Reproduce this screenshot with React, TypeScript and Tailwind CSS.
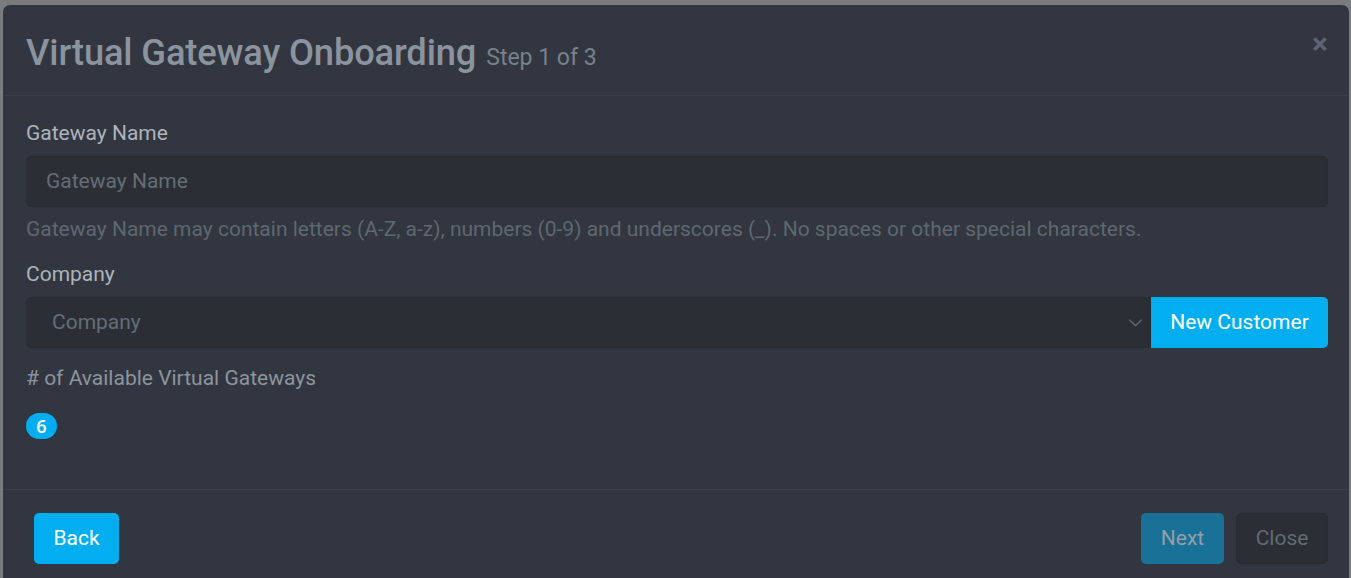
import React from "react";

export default function App() {
  return (
    <div className="w-[1351px] h-[578px] bg-[#7a7b7d] overflow-hidden pt-[5px] pl-[3px]" style={{ fontFamily: "Roboto, 'Liberation Sans', sans-serif" }}>
      <div className="w-[1346px] h-[600px] bg-[#323640] rounded-[7px] flex flex-col">
        <div className="h-[91px] border-b border-[#3a3f48] flex items-start justify-between pl-[23px] pr-[21px]">
          <div className="flex items-baseline mt-[26px]">
            <span className="text-[36.3px] font-medium text-[#8b949e] leading-[44px] tracking-[-0.15px]">Virtual Gateway Onboarding</span>
            <span className="ml-[10px] text-[23px] text-[#79818b]">Step 1 of 3</span>
          </div>
          <button className="mt-[24px] text-[#5d6570] text-[30px] font-bold leading-none">×</button>
        </div>
        <div className="h-[394px] border-b border-[#3a3f48] pl-[23px] pr-[21px] pt-[22px]">
          <div className="text-[21px] text-[#adb4bc] leading-[30px]">Gateway Name</div>
          <div className="mt-[8px] h-[51px] rounded-[5px] bg-[#2b2f35] border border-[#292c31] flex items-center pl-[19px] text-[21px] text-[#656d77]">Gateway Name</div>
          <div className="mt-[7px] text-[21px] text-[#5f6770] leading-[30px]">Gateway Name may contain letters (A-Z, a-z), numbers (0-9) and underscores (_). No spaces or other special characters.</div>
          <div className="mt-[15px] text-[21px] text-[#adb4bc] leading-[30px]">Company</div>
          <div className="mt-[8px] flex h-[51px]">
            <div className="flex-1 rounded-l-[5px] bg-[#2b2f35] border border-[#292c31] flex items-center justify-between pl-[25px] pr-[7px] text-[21px] text-[#656d77]">
              <span>Company</span>
              <svg width="15" height="15" viewBox="0 0 16 16" fill="none" stroke="#5f6771" strokeWidth="1.6" strokeLinecap="round" strokeLinejoin="round"><path d="M2 5.5l6 6 6-6" /></svg>
            </div>
            <button className="w-[177px] bg-[#03aef0] rounded-r-[5px] text-white text-[21px] leading-none">New Customer</button>
          </div>
          <div className="mt-[15px] text-[21px] text-[#8c949d] leading-[30px]">
            # of Available Virtual Gateways
          </div>
          <div className="mt-[20px] flex items-center justify-center w-[31px] h-[26px] rounded-full bg-[#03aef0] text-white text-[18px] font-semibold leading-none" style={{ fontFamily: "'Open Sans', Roboto, sans-serif" }}>6</div>
        </div>
        <div className="flex justify-between items-start pt-[23px] pl-[31px] pr-[21px]">
          <button className="h-[51px] w-[85px] rounded-[5px] bg-[#03aef0] text-white text-[21px]">Back</button>
          <div className="flex gap-[12px]">
            <button className="h-[51px] w-[83px] rounded-[5px] bg-[#1a7198] text-[#969ea6] text-[21px]">Next</button>
            <button className="h-[51px] w-[92px] rounded-[5px] bg-[#2b2f35] border border-[#292c31] text-[#626a73] text-[21px]">Close</button>
          </div>
        </div>
      </div>
    </div>
  );
}
